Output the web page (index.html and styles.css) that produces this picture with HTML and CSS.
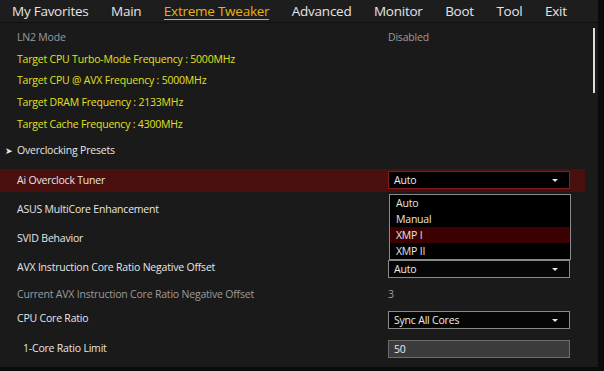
FILE: index.html
```html
<!DOCTYPE html>
<html lang="en">
<head>
  <meta charset="UTF-8">
  <title>Extreme Tweaker</title>
  <link rel="stylesheet" href="styles.css">
</head>
<body>
  <div class="screen">
    <nav class="tabs">
      <span class="tab">My Favorites</span>
      <span class="tab">Main</span>
      <span class="tab active">Extreme Tweaker</span>
      <span class="tab">Advanced</span>
      <span class="tab">Monitor</span>
      <span class="tab">Boot</span>
      <span class="tab">Tool</span>
      <span class="tab">Exit</span>
    </nav>

    <main class="settings">
      <div class="scrollbar"></div>

      <div class="row info-row muted">
        <span class="label">LN2 Mode</span>
        <span class="value">Disabled</span>
      </div>
      <div class="row info-row info"><span class="label">Target CPU Turbo-Mode Frequency : 5000MHz</span></div>
      <div class="row info-row info"><span class="label">Target CPU @ AVX Frequency : 5000MHz</span></div>
      <div class="row info-row info"><span class="label">Target DRAM Frequency : 2133MHz</span></div>
      <div class="row info-row info"><span class="label">Target Cache Frequency : 4300MHz</span></div>

      <div class="row submenu">
        <span class="arrow">&#10148;</span>
        <span class="label">Overclocking Presets</span>
      </div>

      <div class="row selected">
        <span class="label">Ai Overclock Tuner</span>
        <div class="select">Auto<span class="caret"></span></div>
        <ul class="dropdown">
          <li>Auto</li>
          <li>Manual</li>
          <li class="hover">XMP I</li>
          <li>XMP II</li>
        </ul>
      </div>

      <div class="row tall"><span class="label">ASUS MultiCore Enhancement</span></div>
      <div class="row tall"><span class="label">SVID Behavior</span></div>

      <div class="row tall">
        <span class="label">AVX Instruction Core Ratio Negative Offset</span>
        <div class="select low">Auto<span class="caret"></span></div>
      </div>

      <div class="row mid muted">
        <span class="label">Current AVX Instruction Core Ratio Negative Offset</span>
        <span class="value">3</span>
      </div>

      <div class="row mid">
        <span class="label">CPU Core Ratio</span>
        <div class="select low">Sync All Cores<span class="caret"></span></div>
      </div>

      <div class="row last sub">
        <span class="label">1-Core Ratio Limit</span>
        <div class="input">50</div>
      </div>
    </main>
  </div>
</body>
</html>
```

FILE: styles.css
```css
body {
  margin: 0;
  background: #0b0b0b;
  font-family: "Open Sans", "Noto Sans", sans-serif;
  color: #e6e6e6;
}
.screen {
  width: 598px;
  height: 367px;
  background: #1a1a1a;
  overflow: hidden;
}
.tabs {
  display: flex;
  gap: 22.5px;
  height: 22px;
  padding-left: 12px;
  background: #1d1d1d;
  border-bottom: 1px solid #101010;
  font-size: 13.5px;
  letter-spacing: -0.25px;
  line-height: 23px;
  white-space: nowrap;
  color: #e4e4e4;
}
.tab {
  flex-shrink: 0;
}
.tab.active {
  color: #e8b10e;
  position: relative;
}
.tab.active::after {
  content: "";
  position: absolute;
  left: 0;
  right: 0;
  top: 19px;
  height: 1px;
  background: #e8b10e;
}
.settings {
  position: relative;
  padding-top: 3px;
  font-size: 10.5px;
  letter-spacing: -0.2px;
}
.scrollbar {
  position: absolute;
  left: 593px;
  top: 5px;
  width: 2px;
  height: 65px;
  background: #dcdcdc;
}
.row {
  position: relative;
  display: flex;
  align-items: center;
  height: 22px;
  width: 585px;
  padding-left: 17px;
  box-sizing: border-box;
  white-space: nowrap;
}
.row.info-row {
  height: 21.75px;
}
.row.tall {
  height: 29px;
}
.row.mid {
  height: 24px;
}
.row.last {
  height: 36px;
}
.row .label {
  width: 371px;
  flex-shrink: 0;
}
.muted {
  color: #9c9c9c;
}
.info {
  color: #e0e021;
}
.row.submenu {
  height: 31px;
  padding-left: 5px;
}
.submenu .arrow {
  width: 12px;
  font-size: 9px;
  color: #e6e6e6;
}
.sub .label {
  padding-left: 6px;
  width: 365px;
}
.row.selected {
  height: 23px;
  margin: 3px 0;
  background: #4a1010;
}
.select,
.input {
  width: 182px;
  height: 18px;
  box-sizing: border-box;
  padding-left: 5px;
  line-height: 16px;
  border: 1px solid #8a8a8a;
  background: #060606;
  color: #ececec;
  position: relative;
}
.select.low {
  margin-top: 4px;
}
.selected .select {
  border-color: #801c1c;
  background: #000;
}
.input {
  margin-top: 2px;
  background: #3b3b3b;
  border-color: #6e6e6e;
}
.caret {
  position: absolute;
  right: 11px;
  top: 7px;
  border-left: 3px solid transparent;
  border-right: 3px solid transparent;
  border-top: 3px solid #e6e6e6;
}
.dropdown {
  position: absolute;
  left: 389px;
  top: 25px;
  width: 182px;
  height: 66px;
  box-sizing: border-box;
  margin: 0;
  padding: 0;
  list-style: none;
  background: #000;
  border: 1px solid #8a8a8a;
  z-index: 5;
}
.dropdown li {
  height: 16px;
  line-height: 16px;
  padding-left: 6px;
}
.dropdown li.hover {
  background: #3c0000;
}
```
